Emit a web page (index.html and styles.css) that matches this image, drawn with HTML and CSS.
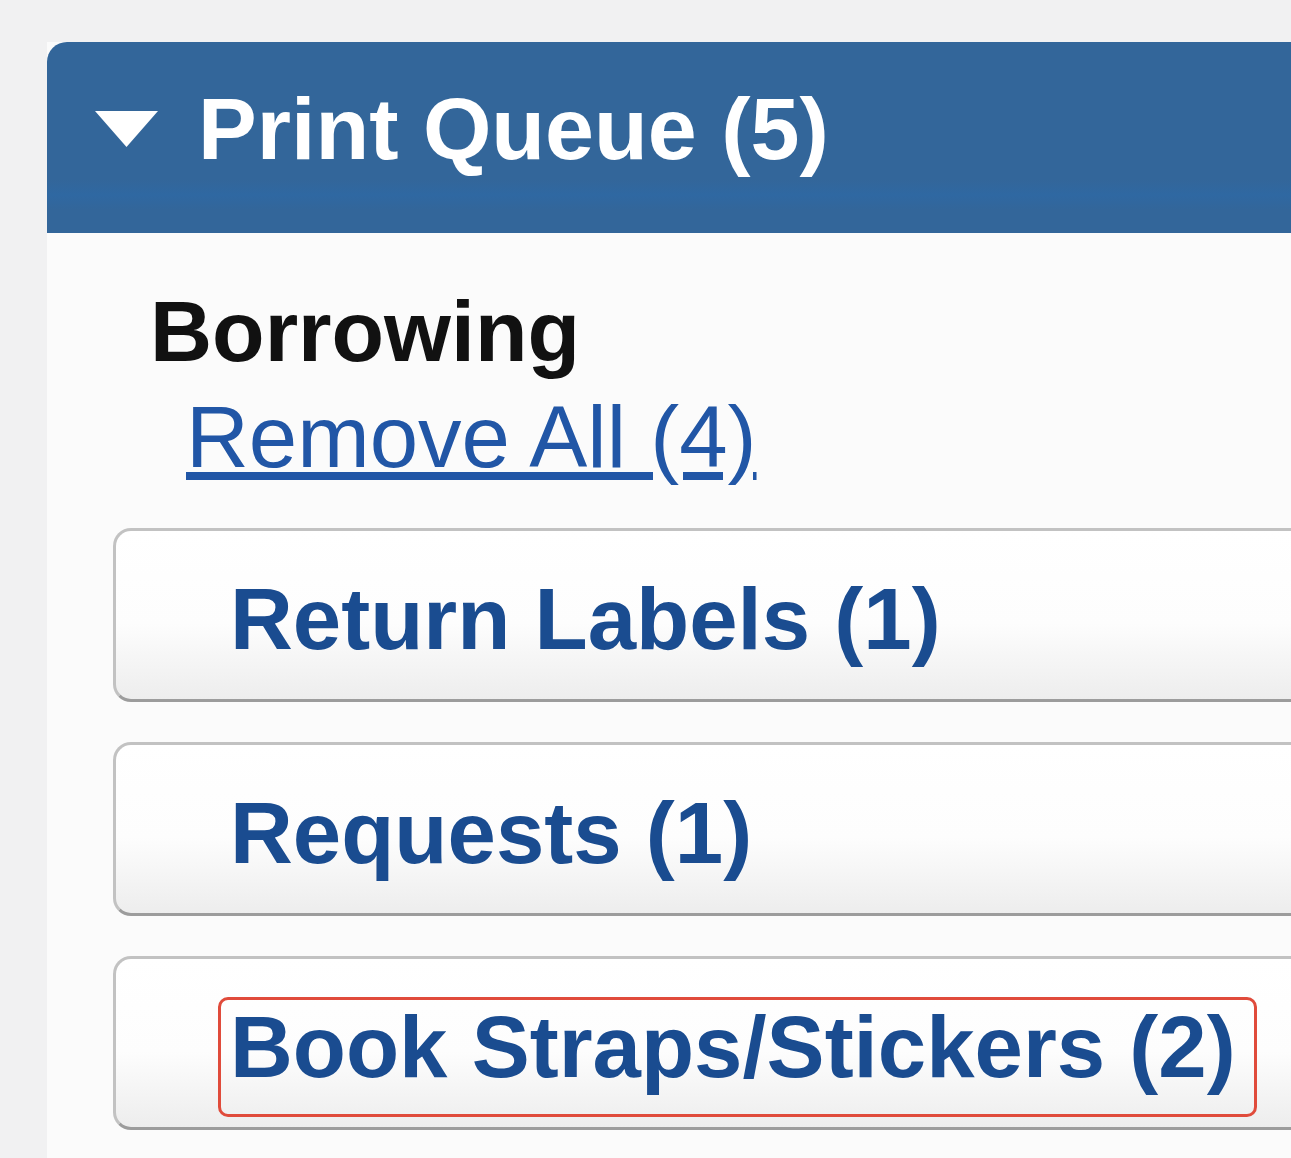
FILE: index.html
```html
<!DOCTYPE html>
<html lang="en">
<head>
    <meta charset="UTF-8">
    <meta name="viewport" content="width=device-width, initial-scale=1.0">
    <title>Print Queue</title>
    <link rel="stylesheet" href="styles.css">
</head>
<body>

<div id="queue-page">
    <div class="panel">
        <div class="panel-head">
            <svg class="caret" width="63" height="36" viewBox="0 0 63 36">
                <polygon points="0,0 63,0 31.5,36" fill="#fff"/>
            </svg>
            <h1>Print Queue (5)</h1>
        </div>
        <div class="panel-body">
            <h2>Borrowing</h2>
            <a href="#" class="remove-all">Remove All (4)</a>
            <ul class="queue-list">
                <li><button type="button">Return Labels (1)</button></li>
                <li><button type="button">Requests (1)</button></li>
                <li><button type="button"><span class="marked">Book Straps/Stickers (2)</span></button></li>
            </ul>
        </div>
    </div>
</div>

</body>
</html>
```

FILE: styles.css
```css
body {
    font-family: "Liberation Sans", Arial, sans-serif;
    margin: 0;
    padding: 0;
    background-color: #f1f1f2;
    overflow: hidden;
}

#queue-page {
    padding: 42px 0 0 47px;
}

.panel {
    width: 1300px;
    min-height: 1116px;
    background-color: #fbfbfb;
}

.panel-head {
    height: 191px;
    box-sizing: border-box;
    display: flex;
    align-items: center;
    padding: 0 0 18px 48px;
    background: linear-gradient(#33669a 0%, #33669a 72%, #2f68a2 80%, #33669a 88%, #33669a 100%);
    border-top-left-radius: 20px;
}

.caret {
    flex-shrink: 0;
}

.panel-head h1 {
    margin: 0 0 0 40px;
    font-size: 88px;
    font-weight: bold;
    color: #fff;
}

.panel-body {
    padding: 49px 0 0 66px;
}

.panel-body h2 {
    margin: 0 0 6px 37px;
    font-size: 86px;
    font-weight: bold;
    color: #111;
    line-height: normal;
}

.remove-all {
    display: inline-block;
    margin-left: 73px;
    font-size: 87px;
    color: #2156a6;
}

.queue-list {
    list-style-type: none;
    margin: 41px 0 0 0;
    padding: 0;
    display: flex;
    flex-direction: column;
    gap: 40px;
}

.queue-list button {
    display: flex;
    align-items: center;
    width: 1250px;
    height: 174px;
    padding: 8px 0 0 114px;
    font-family: inherit;
    font-size: 87px;
    font-weight: bold;
    color: #1a4c90;
    text-align: left;
    background: linear-gradient(#ffffff 0%, #fdfdfd 55%, #ededed 100%);
    border: 3px solid #c2c2c2;
    border-bottom-color: #9c9c9c;
    border-radius: 18px;
    cursor: pointer;
}

.marked {
    position: relative;
}

.marked::after {
    content: "";
    position: absolute;
    left: -12px;
    right: -21px;
    top: 0;
    bottom: -20px;
    border: 3px solid #e04b3b;
    border-radius: 10px;
}
```
